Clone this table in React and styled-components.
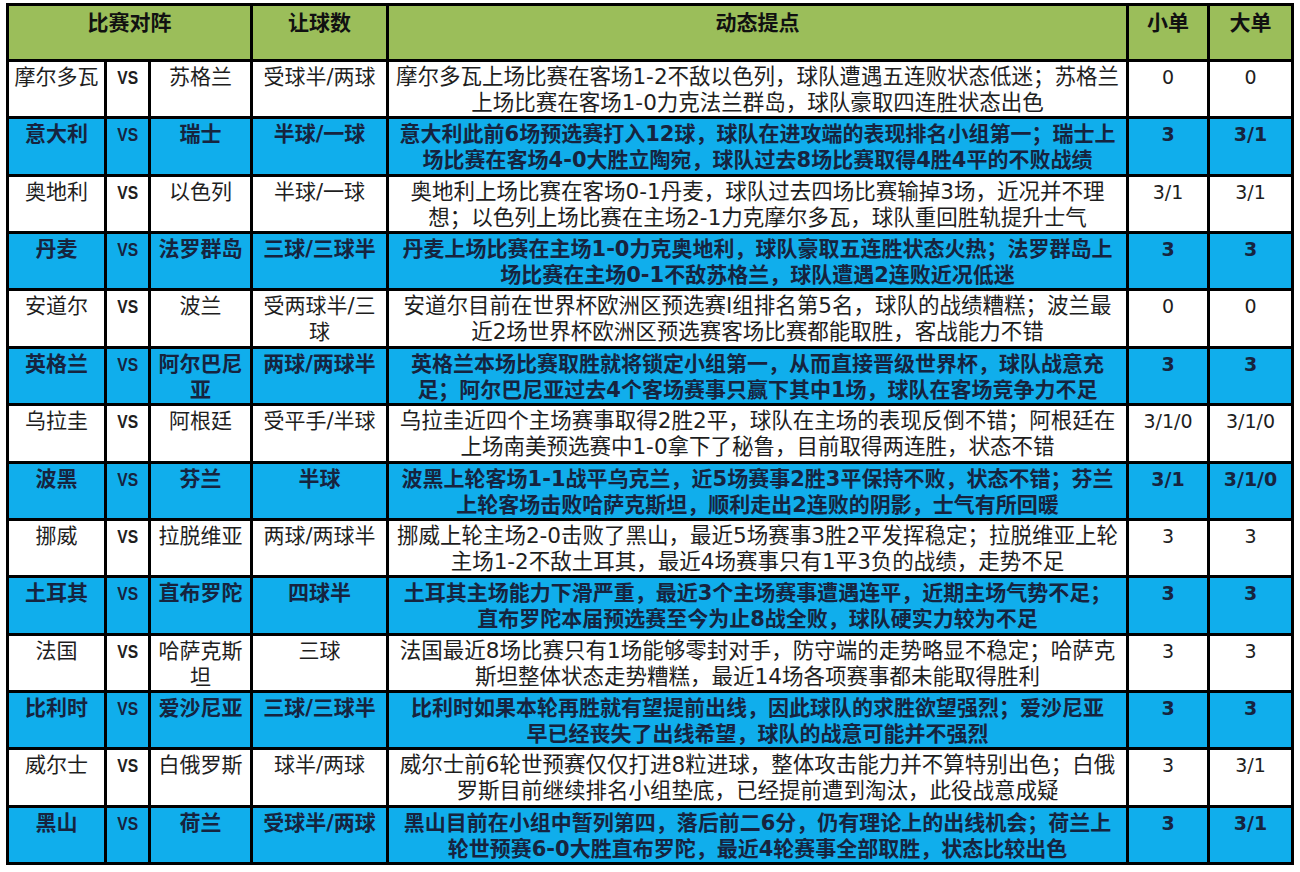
import React from 'react';
import styled, { createGlobalStyle } from 'styled-components';

const rows = [
  {
    home: '摩尔多瓦', away: '苏格兰', line: '受球半/两球',
    note: ['摩尔多瓦上场比赛在客场1-2不敌以色列，球队遭遇五连败状态低迷；苏格兰', '上场比赛在客场1-0力克法兰群岛，球队豪取四连胜状态出色'],
    small: '0', big: '0',
  },
  {
    home: '意大利', away: '瑞士', line: '半球/一球',
    note: ['意大利此前6场预选赛打入12球，球队在进攻端的表现排名小组第一；瑞士上', '场比赛在客场4-0大胜立陶宛，球队过去8场比赛取得4胜4平的不败战绩'],
    small: '3', big: '3/1',
  },
  {
    home: '奥地利', away: '以色列', line: '半球/一球',
    note: ['奥地利上场比赛在客场0-1丹麦，球队过去四场比赛输掉3场，近况并不理', '想；以色列上场比赛在主场2-1力克摩尔多瓦，球队重回胜轨提升士气'],
    small: '3/1', big: '3/1',
  },
  {
    home: '丹麦', away: '法罗群岛', line: '三球/三球半',
    note: ['丹麦上场比赛在主场1-0力克奥地利，球队豪取五连胜状态火热；法罗群岛上', '场比赛在主场0-1不敌苏格兰，球队遭遇2连败近况低迷'],
    small: '3', big: '3',
  },
  {
    home: '安道尔', away: '波兰', line: '受两球半/三球',
    note: ['安道尔目前在世界杯欧洲区预选赛I组排名第5名，球队的战绩糟糕；波兰最', '近2场世界杯欧洲区预选赛客场比赛都能取胜，客战能力不错'],
    small: '0', big: '0',
  },
  {
    home: '英格兰', away: '阿尔巴尼亚', line: '两球/两球半',
    note: ['英格兰本场比赛取胜就将锁定小组第一，从而直接晋级世界杯，球队战意充', '足；阿尔巴尼亚过去4个客场赛事只赢下其中1场，球队在客场竞争力不足'],
    small: '3', big: '3',
  },
  {
    home: '乌拉圭', away: '阿根廷', line: '受平手/半球',
    note: ['乌拉圭近四个主场赛事取得2胜2平，球队在主场的表现反倒不错；阿根廷在', '上场南美预选赛中1-0拿下了秘鲁，目前取得两连胜，状态不错'],
    small: '3/1/0', big: '3/1/0',
  },
  {
    home: '波黑', away: '芬兰', line: '半球',
    note: ['波黑上轮客场1-1战平乌克兰，近5场赛事2胜3平保持不败，状态不错；芬兰', '上轮客场击败哈萨克斯坦，顺利走出2连败的阴影，士气有所回暖'],
    small: '3/1', big: '3/1/0',
  },
  {
    home: '挪威', away: '拉脱维亚', line: '两球/两球半',
    note: ['挪威上轮主场2-0击败了黑山，最近5场赛事3胜2平发挥稳定；拉脱维亚上轮', '主场1-2不敌土耳其，最近4场赛事只有1平3负的战绩，走势不足'],
    small: '3', big: '3',
  },
  {
    home: '土耳其', away: '直布罗陀', line: '四球半',
    note: ['土耳其主场能力下滑严重，最近3个主场赛事遭遇连平，近期主场气势不足；', '直布罗陀本届预选赛至今为止8战全败，球队硬实力较为不足'],
    small: '3', big: '3',
  },
  {
    home: '法国', away: '哈萨克斯坦', line: '三球',
    note: ['法国最近8场比赛只有1场能够零封对手，防守端的走势略显不稳定；哈萨克', '斯坦整体状态走势糟糕，最近14场各项赛事都未能取得胜利'],
    small: '3', big: '3',
  },
  {
    home: '比利时', away: '爱沙尼亚', line: '三球/三球半',
    note: ['比利时如果本轮再胜就有望提前出线，因此球队的求胜欲望强烈；爱沙尼亚', '早已经丧失了出线希望，球队的战意可能并不强烈'],
    small: '3', big: '3',
  },
  {
    home: '威尔士', away: '白俄罗斯', line: '球半/两球',
    note: ['威尔士前6轮世预赛仅仅打进8粒进球，整体攻击能力并不算特别出色；白俄', '罗斯目前继续排名小组垫底，已经提前遭到淘汰，此役战意成疑'],
    small: '3', big: '3/1',
  },
  {
    home: '黑山', away: '荷兰', line: '受球半/两球',
    note: ['黑山目前在小组中暂列第四，落后前二6分，仍有理论上的出线机会；荷兰上', '轮世预赛6-0大胜直布罗陀，最近4轮赛事全部取胜，状态比较出色'],
    small: '3', big: '3/1',
  },
];

function App() {
  return (
    <>
      <GlobalStyle />
      <Sheet>
        <Cell $tone="head" $span={3}>比赛对阵</Cell>
        <Cell $tone="head">让球数</Cell>
        <Cell $tone="head">动态提点</Cell>
        <Cell $tone="head">小单</Cell>
        <Cell $tone="head">大单</Cell>
        {rows.map((r, i) => {
          const tone = i % 2 ? 'blue' : 'plain';
          return (
            <React.Fragment key={r.home}>
              <Cell $tone={tone}>{r.home}</Cell>
              <Cell $tone={tone}><Vs>VS</Vs></Cell>
              <Cell $tone={tone}>{r.away}</Cell>
              <Cell $tone={tone}>{r.line}</Cell>
              <Cell $tone={tone}>
                {r.note.map((t) => (
                  <NoteLine key={t} $tone={tone}>{t}</NoteLine>
                ))}
              </Cell>
              <Cell $tone={tone}><Num>{r.small}</Num></Cell>
              <Cell $tone={tone}><Num>{r.big}</Num></Cell>
            </React.Fragment>
          );
        })}
      </Sheet>
    </>
  );
}

export default App;

const GlobalStyle = createGlobalStyle`
  body {
    margin: 0;
    background: #ffffff;
  }
`;

const tones = {
  head: { bg: '#9bbe5a', color: '#111111', weight: 700 },
  plain: { bg: '#ffffff', color: '#1e1e1e', weight: 400 },
  blue: { bg: '#10aeec', color: '#16243f', weight: 700 },
};

const Sheet = styled.div`
  display: grid;
  grid-template-columns: 95px 41px 99px 133px 737px 78px 81px;
  grid-template-rows: 53px repeat(14, 54.36px);
  gap: 3px;
  padding: 3px;
  margin: 3px 0 0 6px;
  width: fit-content;
  background: #000000;
  font-family: "DejaVu Sans", "Noto Sans CJK SC", sans-serif;
`;

const Cell = styled.div`
  grid-column: span ${(p) => p.$span || 1};
  background: ${(p) => tones[p.$tone].bg};
  color: ${(p) => tones[p.$tone].color};
  font-weight: ${(p) => tones[p.$tone].weight};
  font-size: 21px;
  line-height: 26px;
  padding: ${(p) => (p.$tone === 'head' ? '4px 2px 0' : '2px 2px 0')};
  text-align: center;
  overflow: hidden;
`;

const NoteLine = styled.div`
  white-space: nowrap;
  font-size: ${(p) => (p.$tone === 'blue' ? '21px' : '21.5px')};
`;

const Vs = styled.span`
  display: inline-block;
  font-family: "Liberation Sans", sans-serif;
  font-size: 19px;
  font-weight: 700;
  transform: scaleX(0.82);
`;

const Num = styled.span`
  font-family: "DejaVu Sans", sans-serif;
  font-size: 19px;
`;
